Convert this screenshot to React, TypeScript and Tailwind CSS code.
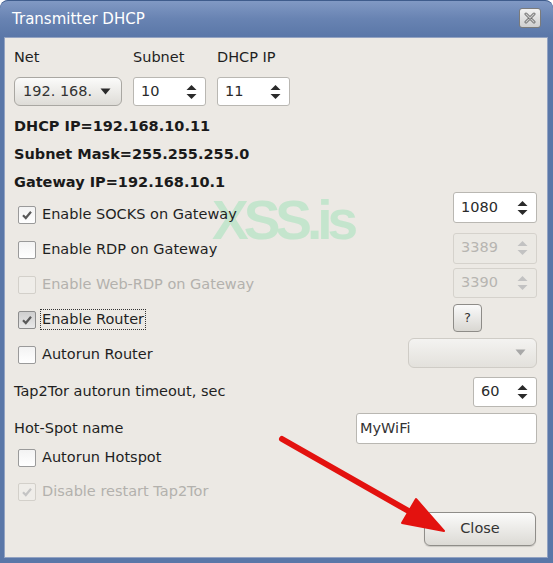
import React from 'react';

const Check = ({ checked, disabled, pressed }: { checked?: boolean; disabled?: boolean; pressed?: boolean }) => (
  <span
    className={`w-[18px] h-[18px] shrink-0 rounded-[2px] border flex items-center justify-center ${
      disabled
        ? 'border-[#d3d0ca] bg-[#efede9]'
        : pressed
        ? 'border-[#8d8d8d] bg-gradient-to-b from-[#cfcfcf] to-[#e9e9e9]'
        : 'border-[#9a9a9a] bg-gradient-to-b from-[#f3f3f3] to-white'
    }`}
  >
    {checked && (
      <svg width="12" height="12" viewBox="0 0 12 12">
        <path
          d="M2 6.2 L4.8 9 L10 2.8"
          fill="none"
          stroke={disabled ? '#c4c4c4' : '#5a5a5a'}
          strokeWidth="2.2"
        />
      </svg>
    )}
  </span>
);

const Arrows = ({ disabled }: { disabled?: boolean }) => (
  <svg width="11" height="16" viewBox="0 0 11 16">
    <path d="M5.5 1 L10.5 6 L0.5 6 Z" fill={disabled ? '#c2c2c2' : '#2a2a2a'} />
    <path d="M0.5 10 L10.5 10 L5.5 15 Z" fill={disabled ? '#c2c2c2' : '#2a2a2a'} />
  </svg>
);

const Spin = ({ value, className, disabled }: { value: string; className: string; disabled?: boolean }) => (
  <div
    className={`${className} flex items-center justify-between pl-[7px] pr-[8px] rounded-[3px] border ${
      disabled ? 'border-[#d5d2cc] bg-[#ebe9e4] text-[#b7b5b1]' : 'border-[#b9b7b2] bg-white text-[#2a2a2a]'
    }`}
  >
    <span>{value}</span>
    <Arrows disabled={disabled} />
  </div>
);

const Row = ({ label, checked, disabled, pressed, focused, right, h }: {
  label: string; checked?: boolean; disabled?: boolean; pressed?: boolean; focused?: boolean; right?: React.ReactNode; h: string;
}) => (
  <div className={`${h} flex items-center justify-between`}>
    <div className="flex items-center gap-[6px] ml-[4px]">
      <Check checked={checked} disabled={disabled} pressed={pressed} />
      <span
        className={`${disabled ? 'text-[#b3b1ad]' : 'text-[#1f1f1f]'} ${
          focused ? 'border border-dotted border-[#333] -ml-[2px] px-[1px] leading-[19px]' : ''
        }`}
      >
        {label}
      </span>
    </div>
    {right}
  </div>
);

export default function App() {
  return (
    <div className="w-[553px] h-[563px] flex flex-col rounded-t-[8px] bg-[#5a77a8] font-['DejaVu_Sans',sans-serif] text-[14.5px] text-[#1f1f1f] relative overflow-hidden">
      {/* title bar */}
      <div className="h-[37px] shrink-0 flex items-center justify-between pl-[12px] pr-[12px] bg-gradient-to-b from-[#8199c4] via-[#6883b2] to-[#5a77a8] border-t border-[#3f5c8c] rounded-t-[8px]">
        <span className="text-white text-[15px]">Transmitter DHCP</span>
        <div className="w-[22px] h-[20px] rounded-[3px] border border-[#7b7b7b] bg-gradient-to-b from-[#f2f2f2] to-[#cfcfcf] flex items-center justify-center mt-[-2px]">
          <svg width="12" height="12" viewBox="0 0 12 12">
            <path d="M2 2 L10 10 M10 2 L2 10" stroke="#6d6d6d" strokeWidth="3" strokeLinecap="round" />
            <path d="M2 2 L10 10 M10 2 L2 10" stroke="#c8c8c8" strokeWidth="1.2" strokeLinecap="round" />
          </svg>
        </div>
      </div>

      {/* body */}
      <div className="flex-1 pl-[4px] pr-[5px] pb-[5px]">
        <div className="relative isolate h-full bg-[#ece9e4] border border-[#93a3c2] pl-[9px] pr-[10px]">
          {/* watermark, behind the form */}
          <div className="absolute z-0 left-[207px] top-[155px] text-[55px] font-bold tracking-[-5px] text-[#c4e5cd] font-['Liberation_Sans',sans-serif] pointer-events-none leading-none">
            XSS.is
          </div>

          <div className="relative z-10 flex flex-col">
            {/* Net / Subnet / DHCP IP */}
            <div className="flex gap-[11px] mt-[9px]">
              <div className="flex flex-col w-[108px]">
                <span className="h-[20px] leading-[20px]">Net</span>
                <div className="mt-[10px] h-[29px] rounded-[6px] border border-[#a9a7a2] bg-gradient-to-b from-[#fbfbfa] to-[#dedcd7] flex items-center justify-between pl-[8px] pr-[10px] text-[#333]">
                  <span>192. 168.</span>
                  <svg width="11" height="7" viewBox="0 0 11 7"><path d="M0.5 0.5 L10.5 0.5 L5.5 6.5 Z" fill="#2a2a2a" /></svg>
                </div>
              </div>
              <div className="flex flex-col w-[73px]">
                <span className="h-[20px] leading-[20px]">Subnet</span>
                <Spin value="10" className="mt-[10px] h-[29px]" />
              </div>
              <div className="flex flex-col w-[73px]">
                <span className="h-[20px] leading-[20px]">DHCP IP</span>
                <Spin value="11" className="mt-[10px] h-[29px]" />
              </div>
            </div>

            {/* summary */}
            <div className="mt-[7px] font-bold text-[#1a1a1a]">
              <div className="h-[28px] flex items-center">DHCP IP=192.168.10.11</div>
              <div className="h-[28px] flex items-center">Subnet Mask=255.255.255.0</div>
              <div className="h-[28px] flex items-center">Gateway IP=192.168.10.1</div>
            </div>

            <Row h="h-[35px]" label="Enable SOCKS on Gateway" checked right={<Spin value="1080" className="w-[84px] h-[31px] mb-[14px]" />} />
            <Row h="h-[35px]" label="Enable RDP on Gateway" right={<Spin value="3389" className="w-[84px] h-[31px] mb-[3px]" disabled />} />
            <Row h="h-[35px]" label="Enable Web-RDP on Gateway" disabled right={<Spin value="3390" className="w-[84px] h-[30px] mb-[3px]" disabled />} />
            <Row
              h="h-[35px]"
              label="Enable Router"
              checked
              pressed
              focused
              right={
                <div className="w-[29px] h-[28px] mr-[55px] mb-[3px] rounded-[4px] border border-[#8e8c88] bg-gradient-to-b from-[#fafafa] to-[#d9d7d2] flex items-center justify-center text-[13px] text-[#333]">
                  ?
                </div>
              }
            />
            <Row
              h="h-[35px]"
              label="Autorun Router"
              right={
                <div className="w-[129px] h-[30px] mb-[4px] rounded-[6px] border border-[#cfccc6] bg-gradient-to-b from-[#f4f3f1] to-[#e3e1dc] flex items-center justify-end pr-[10px]">
                  <svg width="11" height="7" viewBox="0 0 11 7"><path d="M0.5 0.5 L10.5 0.5 L5.5 6.5 Z" fill="#a8a8a8" /></svg>
                </div>
              }
            />

            <div className="h-[39px] flex items-center justify-between">
              <span>Tap2Tor autorun timeout, sec</span>
              <Spin value="60" className="w-[64px] h-[30px] mt-[1px]" />
            </div>
            <div className="h-[35px] flex items-center justify-between">
              <span>Hot-Spot name</span>
              <div className="w-[181px] h-[31px] rounded-[3px] border border-[#b9b7b2] bg-white flex items-center pl-[3px] text-[#333]">MyWiFi</div>
            </div>
            <Row h="h-[23px]" label="Autorun Hotspot" />
            <div className="mt-[5px]">
              <Row h="h-[36px]" label="Disable restart Tap2Tor" checked disabled />
            </div>
            <div className="flex justify-end mt-[2px]">
              <div className="w-[112px] h-[34px] mr-[1px] rounded-[6px] border border-[#8f8d89] bg-gradient-to-b from-[#fbfbfa] to-[#dcdad5] shadow-[0_1px_1px_rgba(0,0,0,0.15)] flex items-center justify-center text-[#333]">
                Close
              </div>
            </div>
          </div>
        </div>
      </div>

      {/* red arrow */}
      <svg className="absolute left-0 top-0 pointer-events-none" width="553" height="563" viewBox="0 0 553 563">
        <line x1="282" y1="439" x2="412" y2="513" stroke="#e3120f" strokeWidth="6" strokeLinecap="round" />
        <path d="M444 531 L402 523 L416 499 Z" fill="#e3120f" stroke="#e3120f" strokeWidth="2" strokeLinejoin="round" />
      </svg>
    </div>
  );
}
